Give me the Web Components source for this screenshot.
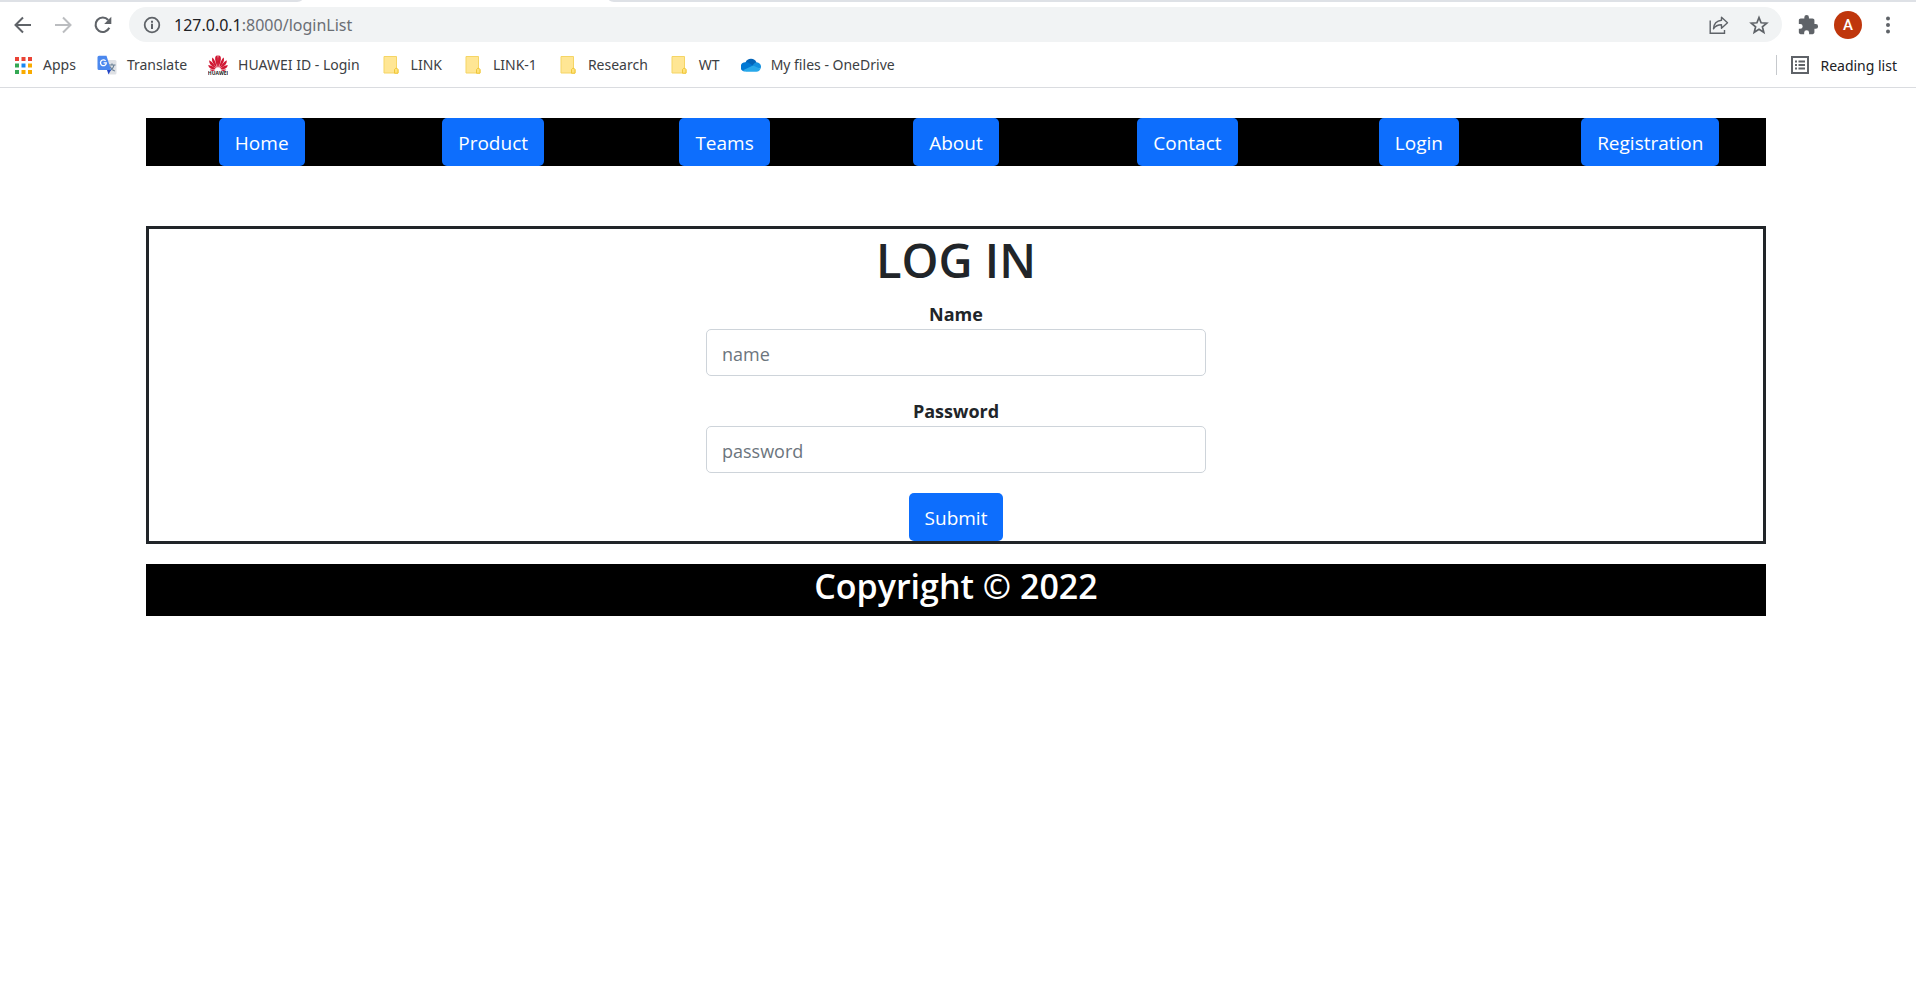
<!DOCTYPE html>
<html lang="en">
<head>
<meta charset="utf-8">
<title>Log in</title>
<style>
  body { margin: 0; background: #fff; color: #212529; font-family: "Open Sans", "Noto Sans", sans-serif; font-size: 18px; }
</style>
</head>
<body>
<browser-bar></browser-bar>
<page-container>
  <site-nav>
    <nav-button href="#home">Home</nav-button>
    <nav-button href="#product">Product</nav-button>
    <nav-button href="#teams">Teams</nav-button>
    <nav-button href="#about">About</nav-button>
    <nav-button href="#contact">Contact</nav-button>
    <nav-button href="#login">Login</nav-button>
    <nav-button href="#registration">Registration</nav-button>
  </site-nav>
  <login-form></login-form>
  <site-footer>Copyright © 2022</site-footer>
</page-container>

<template id="t-browser">
  <style>
    :host { display: block; border-bottom: 1px solid #dadce0; font-family: "Noto Sans", sans-serif; }
    svg { display: block; }
    button { all: unset; box-sizing: border-box; width: 28px; height: 28px; flex: none; display: flex; align-items: center; justify-content: center; cursor: pointer; color: #5f6368; }
    .tabs { display: flex; height: 2px; background: #fff; }
    .tabs i { background: #dee1e6; }
    .tabs .before { width: 302px; border-bottom-right-radius: 8px 2px; }
    .tabs .active { width: 307px; background: #fff; }
    .tabs .after { flex: 1; border-bottom-left-radius: 8px 2px; }
    .toolbar { display: flex; align-items: center; gap: 12px; padding: 5px 14px 1px 9px; }
    .toolbar .back { color: #5f6368; }
    .toolbar .forward { color: #bbbdc0; }
    .omnibox { flex: 1; min-width: 0; height: 35px; border-radius: 18px; background: #f1f3f4; display: flex; align-items: center; gap: 12px; padding: 0 9px; box-sizing: border-box; }
    .site { display: flex; align-items: center; gap: 8px; flex: 1; min-width: 0; }
    .url { flex: 1; font-size: 16px; line-height: 24px; color: #6b6f74; outline: none; white-space: nowrap; overflow: hidden; }
    .url b { font-weight: 400; color: #202124; }
    .avatar { border-radius: 50%; background: #bf360c; color: #fff; font: 500 15px Roboto, sans-serif; }
    .bookmarks { display: flex; align-items: center; gap: 21px; height: 44px; padding: 0 19px 0 13px; font-size: 14px; white-space: nowrap; }
    .reading { margin-left: auto; display: flex; align-items: center; border-left: 1px solid #c6c9cd; padding-left: 13px; height: 20px; }
    .reading button { width: auto; gap: 10px; color: #202124; }
    .reading svg { color: #5f6368; }
  </style>
  <div class="tabs"><i class="before"></i><i class="active"></i><i class="after"></i></div>
  <div class="toolbar">
    <button class="back" aria-label="Back"><svg width="18" height="18" viewBox="0 0 18 18" fill="none" stroke="currentColor" stroke-width="2"><path d="M17 9H2M9 1.500 1.500 9 9 16.500"/></svg></button>
    <button class="forward" aria-label="Forward"><svg width="18" height="18" viewBox="0 0 18 18" fill="none" stroke="currentColor" stroke-width="2"><path d="M1 9h15M9 1.500 16.500 9 9 16.500"/></svg></button>
    <button aria-label="Reload"><svg width="18" height="18" viewBox="0 0 18 18"><path d="M15.300 11.800A7.200 7.200 0 1 1 14.200 4" fill="none" stroke="currentColor" stroke-width="2.100"/><path d="M17.300.8v7.100h-7.100z" fill="currentColor"/></svg></button>
    <div class="omnibox">
      <div class="site">
        <button aria-label="Site information"><svg width="18" height="18" viewBox="0 0 18 18"><circle cx="9" cy="9" r="7.300" fill="none" stroke="currentColor" stroke-width="1.800"/><path d="M8 7.800h2V13H8zM8 4.800h2v1.900H8z" fill="currentColor"/></svg></button>
        <div class="url" role="textbox" aria-label="Address" contenteditable="true" spellcheck="false"><b>127.0.0.1</b>:8000/loginList</div>
      </div>
      <button aria-label="Share"><svg width="20" height="20" viewBox="0 0 20 20" fill="none" stroke="currentColor" stroke-width="1.400"><path d="M1.200 5.500v12.800h14.300V15"/><path d="M12.500 2.300 18.500 7.800l-6 5.400v-3.400c-3.500 0-6 .8-8 4 .3-4.700 3-8 8-8.500z" stroke-linejoin="round"/></svg></button>
      <button aria-label="Bookmark this page"><svg width="20" height="20" viewBox="0 0 20 20" fill="none" stroke="currentColor" stroke-width="1.700"><path d="m10 2.600 2.100 5.200 5.600.4-4.300 3.600 1.400 5.500-4.800-3-4.800 3 1.400-5.500-4.300-3.600 5.600-.4z"/></svg></button>
    </div>
    <button aria-label="Extensions"><svg width="22" height="22" viewBox="0 0 24 24" fill="currentColor"><path d="M20.500 11H19V7c0-1.100-.9-2-2-2h-4V3.500a2.500 2.500 0 0 0-5 0V5H4c-1.100 0-2 .9-2 2v3.800h1.500a2.700 2.700 0 0 1 0 5.400H2V20c0 1.100.9 2 2 2h3.800v-1.500a2.700 2.700 0 0 1 5.400 0V22H17c1.100 0 2-.9 2-2v-4h1.500a2.500 2.500 0 0 0 0-5z"/></svg></button>
    <button class="avatar" aria-label="Profile">A</button>
    <button aria-label="Menu"><svg width="4" height="18" viewBox="0 0 4 18" fill="currentColor"><circle cx="2" cy="2.500" r="2"/><circle cx="2" cy="9" r="2"/><circle cx="2" cy="15.500" r="2"/></svg></button>
  </div>
  <div class="bookmarks">
    <book-mark><svg slot="icon" width="17" height="17" viewBox="0 0 17 17"><path fill="#ea4335" d="M0 0h4v4H0zM6.500 0h4v4h-4zM13 0h4v4h-4z"/><path fill="#34a853" d="M0 6.500h4v4H0zM0 13h4v4H0z"/><path fill="#1a87f0" d="M6.500 6.500h4v4h-4z"/><path fill="#f9ab00" d="M13 6.500h4v4h-4zM6.500 13h4v4h-4zM13 13h4v4h-4z"/></svg>Apps</book-mark>
    <book-mark><svg slot="icon" width="20" height="20" viewBox="0 0 20 20"><path d="M8 5h10a1.500 1.500 0 0 1 1.500 1.500V18a1.500 1.500 0 0 1-1.500 1.500h-6z" fill="#dfe1e5"/><path d="M11.500 10h7M15 8.500V10M17 10c-.6 3-2.600 5-5 6M13 11.500c.8 2 2.500 3.800 4.800 4.500" stroke="#6b8196" stroke-width="1.200" fill="none"/><path d="M10 15h4l-2.500 4.500z" fill="#2446c7"/><path d="M2 .8h7.500L14 15H2A1.500 1.500 0 0 1 .5 13.500V2.300A1.500 1.500 0 0 1 2 .8z" fill="#4b88ee"/><path d="M8.600 5.900a2.900 2.900 0 1 0 .7 2H6.600" stroke="#fff" stroke-width="1.300" fill="none"/></svg>Translate</book-mark>
    <book-mark><svg slot="icon" width="20" height="22" viewBox="0 0 20 22"><g fill="#d01833"><path d="M9.700 14C8 9.500 6.500 5.500 7.300 3c.5-1.300 1.500-1.600 2.300-1.700.6 3.500.4 9 .1 12.700z"/><path d="M8.900 14C5.800 10.800 3 7 4.400 3.500 6.500 5 8.300 10 8.900 14z"/><path d="M8.200 14.300C4.800 12.800.6 10.500 1.300 6.200c3.100 1.500 5.700 5 6.900 8.100z"/><path d="M7.700 15.100C4 15.800.8 14.600.2 11c2.800.3 5.900 2 7.500 4.100z"/><path d="M7.200 15.900c-1.900 1.300-4 1.400-5.600-.1 1.800-.3 3.800-.2 5.600.1z"/></g><g fill="#d01833" transform="matrix(-1 0 0 1 20 0)"><path d="M9.700 14C8 9.500 6.500 5.500 7.300 3c.5-1.300 1.500-1.600 2.300-1.700.6 3.500.4 9 .1 12.700z"/><path d="M8.900 14C5.800 10.800 3 7 4.400 3.500 6.500 5 8.300 10 8.900 14z"/><path d="M8.200 14.300C4.800 12.800.6 10.500 1.300 6.200c3.100 1.500 5.700 5 6.900 8.100z"/><path d="M7.700 15.100C4 15.800.8 14.600.2 11c2.800.3 5.900 2 7.500 4.100z"/><path d="M7.200 15.900c-1.900 1.300-4 1.400-5.600-.1 1.800-.3 3.800-.2 5.600.1z"/></g><text x="10" y="21" text-anchor="middle" font-family="Open Sans" font-weight="700" font-size="5" fill="#222">HUAWEI</text></svg>HUAWEI ID - Login</book-mark>
    <book-mark>LINK</book-mark>
    <book-mark>LINK-1</book-mark>
    <book-mark>Research</book-mark>
    <book-mark>WT</book-mark>
    <book-mark><svg slot="icon" width="20" height="14" viewBox="0 0 20 14"><path d="M4.500 4.500a6 6 0 0 1 11-.2L12 9 5 6z" fill="#0364b8"/><path d="M4.500 4.300c1.800-.2 3 .3 4 1L14 9l-11 4.500A4.700 4.700 0 0 1 4.500 4.300z" fill="#0078d4"/><path d="M12 7c1.200-2 2.500-2.800 3.900-2.700a4.500 4.500 0 0 1 3.600 6.500L13 10z" fill="#1490df"/><path d="M2 12.300 12 7.500l7.500 3.300c-.7 1.900-2.200 2.900-4 2.900H5c-1.200 0-2.200-.5-3-1.400z" fill="#28a8ea"/></svg>My files - OneDrive</book-mark>
    <div class="reading"><button><svg width="20" height="20" viewBox="0 0 20 20"><path d="M2 2h16v16H2z" fill="none" stroke="currentColor" stroke-width="2"/><path d="M5 5.500h2v2H5zM5 9h2v2H5zM5 12.500h2v2H5zM8.500 5.500H15v2H8.500zM8.500 9H15v2H8.500zM8.500 12.500H15v2H8.500z" fill="currentColor"/></svg>Reading list</button></div>
  </div>
</template>

<template id="t-bookmark">
  <style>
    :host { display: block; }
    a { display: flex; align-items: center; gap: 10px; color: #3c4043; text-decoration: none; line-height: 22px; }
    .icon { width: 20px; display: flex; justify-content: center; }
  </style>
  <a href="#bookmark"><span class="icon"><slot name="icon"><svg width="16" height="18" viewBox="0 0 16 18"><path d="M1 .5h12.500v12l1.500 1V17H1z" fill="#ffe694" stroke="#f5d565"/><path d="M11.500 17.200v-3.700l1.200-1.200h1.200l1.100 1.200v3.700z" fill="#ffe27a" stroke="#efc637"/></svg></slot></span><span><slot></slot></span></a>
</template>

<template id="t-container">
  <style>
    :host { display: block; padding: 30px 4px 30px 0; }
    .inner { width: calc(100% - 30px); max-width: 1620px; margin: 0 auto; }
  </style>
  <main class="inner"><slot></slot></main>
</template>

<template id="t-nav">
  <style>
    :host { display: block; background: #000; margin-bottom: 60px; }
    nav { display: grid; grid-template-columns: repeat(7, 1fr); justify-items: center; }
  </style>
  <nav><slot></slot></nav>
</template>

<template id="t-nav-button">
  <style>
    :host { display: block; }
    a { display: block; padding: 2px 16px 0; border-radius: 5px; background: #0d6efd; color: #fff; font-size: 19px; line-height: 46px; text-decoration: none; }
  </style>
  <a><slot></slot></a>
</template>

<template id="t-login">
  <style>
    :host { display: block; border: 3px solid #212529; margin-bottom: 20px; }
    form { display: flex; flex-direction: column; align-items: center; }
    h1 { margin: 0; padding-bottom: 8px; font-size: 47px; font-weight: 600; line-height: 62px; }
    .field { width: 500px; max-width: 100%; margin-bottom: 20px; text-align: center; }
    label { display: block; font-weight: 700; line-height: 30px; }
    input { display: block; box-sizing: border-box; width: 100%; height: 47px; padding: 2px 15px 0; border: 1px solid #ced4da; border-radius: 5px; background: #fff; color: #212529; font: inherit; }
    input::placeholder { color: #6c757d; opacity: 1; }
    button { height: 48px; padding: 2px 16px 0; border: 0; border-radius: 5px; background: #0d6efd; color: #fff; font: inherit; font-size: 19px; }
  </style>
  <form>
    <h1>LOG IN</h1>
    <div class="field"><label for="name">Name</label><input id="name" type="text" placeholder="name"></div>
    <div class="field"><label for="password">Password</label><input id="password" type="password" placeholder="password"></div>
    <button type="submit">Submit</button>
  </form>
</template>

<template id="t-footer">
  <style>
    :host { display: block; background: #000; color: #fff; text-align: center; padding-bottom: 8px; }
    h2 { margin: 0; font-size: 34px; font-weight: 600; line-height: 44px; }
  </style>
  <footer><h2><slot></slot></h2></footer>
</template>

<script>
  class TemplateElement extends HTMLElement {
    constructor() {
      super();
      const root = this.attachShadow({ mode: 'open' });
      root.append(document.getElementById(this.constructor.template).content.cloneNode(true));
    }
  }
  class BookMark extends TemplateElement { static template = 't-bookmark'; }
  class BrowserBar extends TemplateElement { static template = 't-browser'; }
  class PageContainer extends TemplateElement { static template = 't-container'; }
  class SiteNav extends TemplateElement { static template = 't-nav'; }
  class NavButton extends TemplateElement {
    static template = 't-nav-button';
    connectedCallback() {
      this.shadowRoot.querySelector('a').href = this.getAttribute('href') || '#';
    }
  }
  class LoginForm extends TemplateElement {
    static template = 't-login';
    connectedCallback() {
      this.shadowRoot.querySelector('form').addEventListener('submit', (e) => e.preventDefault());
    }
  }
  class SiteFooter extends TemplateElement { static template = 't-footer'; }
  customElements.define('book-mark', BookMark);
  customElements.define('browser-bar', BrowserBar);
  customElements.define('page-container', PageContainer);
  customElements.define('site-nav', SiteNav);
  customElements.define('nav-button', NavButton);
  customElements.define('login-form', LoginForm);
  customElements.define('site-footer', SiteFooter);
</script>
</body>
</html>
